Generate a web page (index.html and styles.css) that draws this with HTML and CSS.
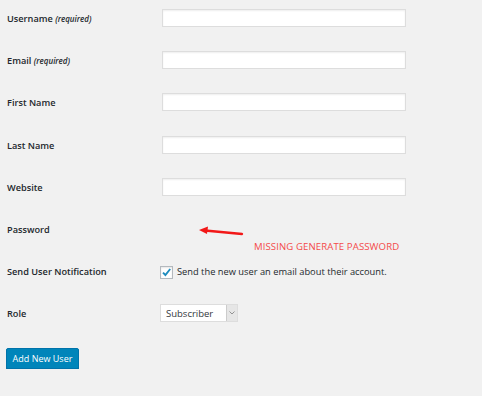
FILE: index.html
```html
<!DOCTYPE html>
<html lang="en">
<head>
    <meta charset="UTF-8">
    <meta name="viewport" content="width=device-width, initial-scale=1.0">
    <title>Add New User</title>
    <link rel="stylesheet" href="styles.css">
</head>
<body>
<form id="createuser" class="form-table" action="#">
    <div class="form-row">
        <label class="row-label" for="user_login">Username <span class="req">(required)</span></label>
        <div class="row-field"><input type="text" class="text-input" id="user_login" name="user_login"/></div>
    </div>
    <div class="form-row">
        <label class="row-label" for="email">Email <span class="req">(required)</span></label>
        <div class="row-field"><input type="email" class="text-input" id="email" name="email"/></div>
    </div>
    <div class="form-row">
        <label class="row-label" for="first_name">First Name</label>
        <div class="row-field"><input type="text" class="text-input" id="first_name" name="first_name"/></div>
    </div>
    <div class="form-row">
        <label class="row-label" for="last_name">Last Name</label>
        <div class="row-field"><input type="text" class="text-input" id="last_name" name="last_name"/></div>
    </div>
    <div class="form-row">
        <label class="row-label" for="url">Website</label>
        <div class="row-field"><input type="url" class="text-input" id="url" name="url"/></div>
    </div>
    <div class="form-row password-row">
        <span class="row-label">Password</span>
        <div class="row-field"></div>
        <!-- annotation drawn over the screenshot -->
        <svg class="note-arrow" width="48" height="12" viewBox="0 0 48 12">
            <path d="M45 9 L8 5.5" stroke="#f21818" stroke-width="2.4" stroke-linecap="round" fill="none"/>
            <path d="M2 5 L11 1.5 L10 9 Z" fill="#f21818"/>
        </svg>
        <span class="note-text">MISSING GENERATE PASSWORD</span>
    </div>
    <div class="form-row">
        <span class="row-label">Send User Notification</span>
        <div class="row-field">
            <label class="check-label">
                <span class="check-box">
                    <svg width="11" height="11" viewBox="0 0 11 11"><path d="M2 5.6 L4.4 8 L9.2 2" stroke="#1e8cbe" stroke-width="1.9" fill="none"/></svg>
                </span>
                Send the new user an email about their account.
            </label>
        </div>
    </div>
    <div class="form-row">
        <label class="row-label" for="role">Role</label>
        <div class="row-field">
            <span class="select-wrap">
                <select id="role" name="role" class="role-select">
                    <option>Subscriber</option>
                    <option>Contributor</option>
                    <option>Author</option>
                    <option>Editor</option>
                    <option>Administrator</option>
                </select>
                <span class="select-arrow">
                    <svg width="6" height="4" viewBox="0 0 6 4"><path d="M0.5 0.5 L3 3 L5.5 0.5" stroke="#888" stroke-width="0.9" fill="none"/></svg>
                </span>
            </span>
        </div>
    </div>
</form>
<div class="btn-layout">
    <div class="btn-add">Add New User</div>
</div>
</body>
</html>
```

FILE: styles.css
```css
body{
    margin: 0;
    padding: 0 0 0 7px;
    background-color: #f1f1f1;
    color: #23282d;
    font-family: "Open Sans", "Noto Sans", sans-serif;
    font-size: 9.2px;
}
.form-table{
    display: flex;
    flex-direction: column;
}
.form-row{
    position: relative;
    display: grid;
    grid-template-columns: 153px 1fr;
    height: 42.2px;
}
.row-label{
    padding-top: 12px;
    line-height: 14px;
    font-weight: 600;
    white-space: nowrap;
}
.req{
    font-size: 8px;
    font-style: italic;
}
.row-field{
    display: flex;
    align-items: flex-start;
}
.text-input{
    box-sizing: border-box;
    width: 244px;
    height: 18px;
    margin: 9px 0 0 2px;
    padding: 0 4px;
    background-color: #fff;
    border: 1px solid #ddd;
    box-shadow: inset 0 1px 2px rgba(0,0,0,.07);
    outline: none;
}
.check-label{
    display: flex;
    align-items: center;
    gap: 4px;
    margin-top: 12px;
    line-height: 14px;
    font-size: 9.3px;
    white-space: nowrap;
}
.check-box{
    box-sizing: border-box;
    display: flex;
    align-items: center;
    justify-content: center;
    width: 13px;
    height: 13px;
    margin-top: 1px;
    background-color: #fff;
    border: 1px solid #b4b9be;
    box-shadow: inset 0 1px 2px rgba(0,0,0,.1);
}
.select-wrap{
    position: relative;
    display: inline-block;
    margin-top: 9px;
}
.role-select{
    appearance: none;
    -webkit-appearance: none;
    box-sizing: border-box;
    width: 78px;
    height: 18px;
    padding: 0 0 0 5px;
    background-color: #fff;
    border: 1px solid #ddd;
    border-radius: 0;
    color: #32373c;
    font-family: "Open Sans", "Noto Sans", sans-serif;
    font-size: 9.5px;
    outline: none;
}
.select-arrow{
    position: absolute;
    top: 1px;
    right: 1px;
    bottom: 1px;
    width: 10px;
    display: flex;
    align-items: center;
    justify-content: center;
    background-color: #e6e6e6;
    border-left: 1px solid #ccc;
}
.note-arrow{
    position: absolute;
    left: 190px;
    top: 14px;
}
.note-text{
    position: absolute;
    left: 247px;
    top: 30px;
    color: #f44a4a;
    font-size: 9.6px;
    line-height: 12px;
    letter-spacing: 0.1px;
}
.btn-layout{
    display: flex;
    justify-content: flex-start;
    padding-top: 10px;
}
.btn-add{
    box-sizing: border-box;
    width: 73px;
    height: 21px;
    margin-left: -1px;
    line-height: 19px;
    text-align: center;
    background-color: #0085ba;
    border: 1px solid #0073aa;
    border-radius: 2px;
    box-shadow: 0 1px 0 #006799;
    color: #fff;
    font-size: 9px;
    cursor: pointer;
}
```
